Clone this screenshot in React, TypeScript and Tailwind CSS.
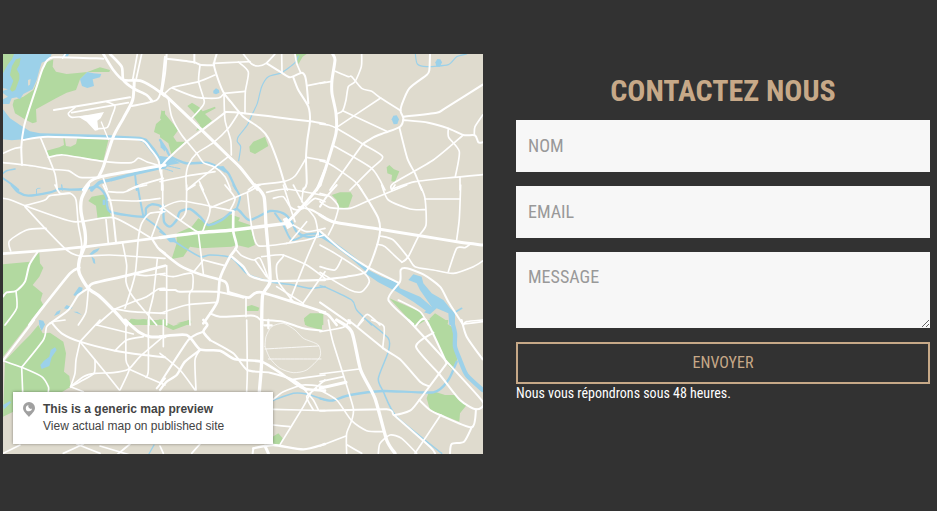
type Road = [number, string];
type Tile = { x: number; y: number; parks: string[]; lakes: string[]; rivers: Road[]; roads: Road[]; blocks?: string[] };

// The map is stored as a 3 by 3 set of sheets, drawn at three units per pixel.
const tiles: Tile[] = [
  {
    x: 0, y: 50,
    parks: [
      '137,38 160,28 158,50 168,65 200,72 240,68 262,66 240,88 228,120 200,128 168,145 108,178 110,216 98,220 78,210 45,190 38,165 42,150 70,140 100,120',
      '262,66 300,52 330,60 328,66',
      '495,182 484,184 488,205 468,222 462,246 495,262',
      '232,265 325,270 310,332 200,315 145,320 140,302 178,292 192,285 190,265 194,265 198,288 212,290 228,282',
    ],
    lakes: [
      '9,12 155,12 148,28 125,38 118,60 110,90 98,118 70,132 60,148 50,142 35,145 28,162 9,162 9,148 24,140 9,130 9,122 24,118 9,114',
      '9,178 30,205 60,225 90,244 120,250 300,254 420,260 440,266 465,296 480,320 495,335 480,336 455,308 430,277 410,270 140,262 70,268 35,271 9,268',
      '240,88 262,66 280,70 304,72 300,82 278,88 282,108 262,114 246,108',
      '186,20 192,12 207,12 203,20',
      '480,272 495,290 495,305 482,292',
    ],
    rivers: [[10, '495,350 400,372 330,390 300,397 275,420'], [6, '405,372 410,420'], [5, '9,370 20,362 45,357'], [6, '9,385 35,403 55,420']],
    roads: [
      [5, '310,26 160,22 130,52 110,110 85,185 72,230 64,290 66,345'],
      [5, '70,270 142,260 340,266 425,270 450,295 475,330 480,360 487,385 488,420'],
      [4, '9,310 45,295 64,292'], [4, '9,338 100,348 155,358 205,362 240,382 295,382'],
      [4, '122,264 145,320 165,372 172,420'], [4, '145,322 190,315 310,334 395,338 415,324 440,335 472,345'],
      [8, '403,90 398,150 370,205 340,260 310,350 295,382'], [4, '412,12 398,90'], [4, '425,12 408,90'],
      [7, '310,12 340,60 370,90 420,92 460,112 495,138'], [7, '330,12 365,50 370,90 400,115 440,135 455,152'],
      [5, '395,168 470,150 485,110 495,20'], [8, '250,420 270,395 295,382 400,362 495,345'],
      [4, '310,385 322,420'], [5, '162,180 390,142'], [4, '215,188 385,158'], [4, '225,172 205,190 216,202 260,198'],
      [4, '320,155 345,168 335,200 322,232 290,236'], [3, '304,216 325,268'],
      [4, '385,420 420,405 490,385'], [4, '188,24 196,12'],
    ],
    blocks: ['235,200 312,186 302,205 292,212 295,240 285,242 260,215'],
  },
  {
    x: 160, y: 50,
    parks: [
      '82,168 96,158 118,172 128,184 165,170 167,175 135,192 156,212 125,238 108,242 120,225 100,200 105,192',
      '5,180 55,240 40,260 50,275 75,275 60,292 35,315 25,280 0,262 0,220 10,215 0,205',
      '268,290 280,275 315,260 325,288 285,312 270,305', '408,12 440,12 428,20 415,43',
    ],
    lakes: ['160,122 168,115 177,120 178,128 168,133 160,130', '0,318 30,322 60,340 30,345 0,360', '170,350 190,348 202,362 195,368'],
    rivers: [
      [3.5, '415,18 405,38 365,68 325,80 305,110 292,160 278,190 262,225 235,260 232,275 242,290 236,332'],
      [7, '0,270 20,300 32,320 80,340 140,338 180,354 205,370 228,418'], [3, '10,345 60,356'], [3, '0,352 38,364'],
    ],
    roads: [
      [8, '0,125 20,140 120,235 205,318 240,352 292,418'], [5, '20,12 15,70 5,130'],
      [5, '20,26 100,36 120,44 160,46'], [5, '103,12 103,38'],
      [5, '170,12 162,45 175,90 192,130 212,155 250,200 300,235 325,265 355,340 372,395 382,420'],
      [4, '160,40 245,36 270,35'], [4, '250,12 275,42 295,48 318,40 345,12'],
      [4, '235,36 265,66 256,125 255,190'], [4, '192,130 256,124'],
      [4, '120,46 116,95 133,155 118,180 95,205'], [4, '165,75 116,95 38,112 15,130'], [4, '38,115 110,142 175,144 192,130'],
      [5, '195,186 240,188 350,202 450,214 495,222'], [4, '192,130 195,210 212,270 214,315'],
      [5, '195,188 140,230 80,275 20,330 0,355'], [4, '235,190 205,235 160,278 110,310 85,345 78,380 80,420'],
      [4, '25,145 35,200 65,255 110,310 130,338 165,352 195,380 212,420'],
      [5, '320,40 365,68 390,82 425,68 435,78 440,105 445,160'], [4, '365,12 366,65'], [4, '405,12 410,40 422,68'],
      [5, '400,82 415,120 445,170 450,214 442,270 438,325 440,400 430,420'], [4, '442,107 495,96'], [4, '440,322 495,332'],
      [4, '265,420 290,405 370,395 405,378 438,325'], [7, '495,360 470,420'],
      [4, '0,395 80,378 165,365'], [4, '205,320 160,355 80,420'], [4, '118,395 130,420'], [4, '5,360 5,420'],
    ],
  },
  {
    x: 320, y: 50,
    parks: ['200,352 208,345 222,358 238,364 225,395 214,394 216,375 202,370'],
    lakes: ['346,37 352,27 361,28 366,37 360,50 349,50', '215,208 220,197 230,196 237,208 232,222 221,223'],
    rivers: [[3.5, '286,12 292,42 320,50 385,44 410,20 440,12']],
    roads: [
      [8, '38,12 45,30 36,90 36,130 48,190 48,250 20,345 0,405'],
      [5, '330,12 328,60 320,75 268,115 245,165 242,185 250,205 240,230 195,248 160,262 128,282'],
      [4, '125,12 124,50 105,95 85,110 78,150 68,182 50,192'], [4, '46,64 85,80 95,80 125,115 155,124 182,144 242,182'],
      [4, '0,100 36,94'], [4, '182,144 50,232'], [4, '68,182 200,244'],
      [5, '250,200 350,188 375,175 488,104'], [5, '250,210 325,218 385,235 430,255 465,256 475,277 488,277'],
      [4, '488,195 465,230 463,256'], [4, '385,236 386,262 418,305 406,380'], [4, '430,255 340,330 220,400 215,420'],
      [4.5, '238,232 262,325 285,370 305,420'], [4, '0,222 25,225 50,235 128,282 188,320 155,355 90,420'],
      [4.5, '128,282 30,420'], [4, '42,288 155,355 195,420'], [4, '0,332 25,340 60,362 105,395 125,420'],
      [4, '215,418 285,395 400,382 488,374'], [4, '420,382 420,420'],
    ],
  },
  {
    x: 0, y: 185,
    parks: [
      '265,48 275,35 315,28 333,95 293,102 288,62',
      '9,238 90,230 118,202 120,235 130,248 118,275 98,300 128,325 122,345 130,360 80,420 9,420',
      '380,408 430,402 495,410 495,420 380,420',
    ],
    lakes: ['220,330 237,305 248,308 246,318 225,333', '268,208 280,196 299,189 294,198 276,210', '274,214 284,222 286,237 280,234', '162,393 170,380 182,374 178,386', '192,370 200,360 218,368 208,374', '220,380 232,380 246,390', '116,404 132,412 135,420 118,420', '308,44 316,44 316,60 308,60'],
    rivers: [
      [7, '35,0 55,22 85,32 150,22 180,12 215,14 255,12 290,5 310,20 320,40 330,80 430,95 438,70 455,58 480,62 495,80'],
      [6, '412,0 430,95'], [5, '430,95 465,120 495,148'], [3, '110,30 110,12 120,10'], [4, '185,0 187,15'],
    ],
    roads: [
      [9, '265,0 245,40 243,80 255,140 255,180 238,225 238,265 265,310 300,335 345,380 380,420'],
      [4, '165,0 180,25 210,25 228,45 235,120 245,180 235,250'], [7, '9,206 190,192 300,180 400,168 495,156'],
      [7, '88,420 130,365 210,265 238,248'], [4, '9,40 30,44 75,62 220,110 340,98 455,160'],
      [4, '75,62 135,45 150,32 210,25'], [4, '75,65 135,130 200,195 240,213 330,210 495,220'],
      [4, '32,198 28,168 80,135 138,130'], [5, '112,202 88,240 75,290 48,318 20,322 9,335'], [4, '48,318 50,370 15,420'],
      [7, '265,310 280,295 380,272 495,242'], [5, '310,0 330,45 340,98 348,172'], [4, '318,104 325,175'],
      [4, '325,20 370,22 405,8 440,0'], [4, '325,45 410,48 480,40'],
      [4, '368,175 380,240 378,290 395,330 440,385 470,420'], [4, '495,80 450,85 425,115 415,160 405,270 375,370'],
      [6, '455,160 475,190 495,205'], [4, '490,60 455,155'], [4, '345,372 400,350 440,335 475,312 495,310'],
      [4, '345,372 395,380 495,385'], [4, '345,372 290,420'], [4, '472,222 460,330 447,385 447,420'], [4, '405,268 440,272 495,265'],
      [4, '265,310 258,380 235,420'], [5, '265,310 235,330 205,375 150,415'],
    ],
  },
  {
    x: 160, y: 185,
    parks: [
      '50,145 95,125 115,100 145,118 210,88 240,98 235,108 270,120 285,180 265,188 230,180 215,185 120,190 90,185 70,215 35,222 50,175',
      '258,365 275,360 298,368 295,378 260,378', '432,400 450,385 490,385 490,420 435,420', '50,415 88,405 88,420',
    ],
    lakes: ['18,160 45,158 50,172 30,172'],
    rivers: [
      [7, '10,60 12,110 30,125 50,105 60,80 90,72 120,95 145,120 185,105 230,72 268,105 330,78 370,85 395,110 410,140 440,155 495,155'],
      [5, '0,140 60,180 120,215 150,210 215,218 260,265 330,290 400,300 450,310 495,305'],
      [6, '220,0 240,35 230,72'], [6, '345,85 370,120 395,165 440,148 480,145'],
    ],
    roads: [
      [9, '0,158 115,143 220,135 380,115'], [9, '285,0 312,35 318,120 325,200 330,290 308,330 305,420'],
      [7, '0,195 60,242 120,268 195,290 205,322'], [7, '220,80 220,140 230,185 210,215 180,280 172,350 130,415'],
      [5, '0,315 45,315 60,320 170,320 250,338'], [7, '205,322 265,338 305,322 495,382'],
      [4, '8,0 8,65 5,85'], [4, '0,72 65,48 210,76 220,80'], [4, '8,68 115,142 135,120 150,70 120,0'],
      [4, '80,0 78,80 62,105'], [4, '80,15 105,0'], [4, '195,0 225,40 210,76'], [4, '152,68 262,22 300,0'],
      [4, '262,22 275,125 295,182 380,175'], [4, '380,175 440,165 495,150'], [4, '115,143 130,265'],
      [4, '130,225 195,242'], [4, '130,225 100,262'], [4, '0,268 40,275 95,265 98,310 88,330 90,420'],
      [4, '20,242 20,420'], [4, '0,385 80,360 172,352'], [4, '225,190 245,212 280,225 300,220 325,280'],
      [4, '305,215 370,210 350,240 355,290 400,350'], [6, '215,215 250,245 270,272 330,288 495,285'],
      [4, '370,210 440,240 495,280'], [4, '285,225 320,275'], [4, '475,140 440,220 390,345'], [4, '495,260 460,310 425,360'],
      [4, '350,305 430,355'], [4, '258,340 258,395'], [5, '150,385 180,395 280,392 305,408'],
      [8, '480,0 440,50 380,115'], [4, '400,0 430,55 465,100 475,150'], [4, '320,22 380,12 495,32'],
      [4, '340,40 370,35 390,65 410,75 430,70'], [5, '415,65 455,75 495,98'], [4, '430,10 425,50'],
      [4, '370,0 395,80 405,110'], [4, '440,60 465,40 495,50'], [4, '390,170 440,110'], [4, '400,120 440,140 495,130'],
    ],
    blocks: ['368,102 380,97 400,122 382,133'],
  },
  {
    x: 320, y: 185,
    parks: ['35,30 60,22 92,22 98,32 85,68 55,68 50,45', '208,340 300,380 310,395 280,418', '325,420 330,400 345,385 385,410 380,420'],
    lakes: [
      '265,285 280,268 305,275 310,295 335,325 370,345 390,370 405,385 405,420 388,420 385,385 350,370 330,388 312,382 335,365 300,315 290,295',
      '135,250 185,275 230,292 240,310 300,335 335,365 322,380 280,350 230,320 175,292 140,268',
    ],
    rivers: [[10, '0,150 40,175 100,220 140,255'], [5, '400,385 425,370'], [4, '0,302 20,308 95,345 110,375 155,420']],
    roads: [
      [8, '0,90 45,112 180,133 300,152 420,172 488,180'], [5, '115,0 150,55 175,100 180,140 165,200 138,260 80,275 0,285'],
      [4, '300,0 315,40 318,120 295,155 265,215 245,232'], [4, '185,0 205,45 270,72 315,74'],
      [4, '315,42 420,42'], [4, '422,0 418,100 410,165'], [4, '260,0 150,45 90,70 30,68 0,50'],
      [5, '0,65 20,35 50,0'], [4, '215,15 225,0'], [4, '0,25 30,35 55,65 42,115 25,150'],
      [5, '0,138 60,190 140,245 235,293'], [4, '180,153 220,165 265,218 285,245 340,255 400,265 460,245 488,228'],
      [4, '172,178 195,185 245,230 265,215'], [4, '385,260 410,190 435,188 450,178'],
      [5, '280,418 205,345 240,290 242,255 260,250 310,268 360,305 385,350 430,420'],
      [4, '235,345 300,380 325,420'], [4, '0,180 45,205 130,262 148,290 125,320 90,315 0,262'],
      [4, '0,245 45,255 65,222'], [5, '0,352 90,415'], [4, '115,420 142,388 180,420'],
      [4, '430,420 440,410 488,405'], [7, '0,380 25,390 50,420'],
    ],
  },
  {
    x: 0, y: 320,
    parks: ['9,0 95,0 9,110', '15,122 60,75 90,45 115,15 128,40 150,38 190,65 198,100 192,155 208,168 212,200 180,220 40,275 9,290'],
    lakes: ['118,0 130,2 134,15 125,33 119,20', '165,82 170,90 155,112 148,138 125,147 121,135 132,122 148,110 152,90', '9,255 30,243 33,248 12,268'],
    rivers: [[4, '445,405 462,375'], [12, '395,2 440,8 495,4']],
    roads: [
      [6, '9,122 102,0'], [4, '65,142 130,60 140,20 160,5 195,0'], [4, '9,122 65,142 125,170 145,200 145,215'], [4, '65,142 68,215'],
      [5, '155,8 185,40 240,65 345,92 440,106 495,112'], [4, '240,65 300,0'], [4, '240,65 228,120 225,160 212,200'],
      [4, '240,65 310,150 358,210'], [4, '285,120 282,160 240,185 212,200'], [4, '212,200 250,170 285,160 340,158 385,148 420,110 490,50'],
      [4, '290,15 400,42'], [4, '345,92 380,60 430,50'], [4, '378,0 378,120 388,148 360,210'], [4, '388,148 495,195'],
      [4, '445,0 445,150 438,172'], [8, '375,0 415,35 450,50 495,50'], [5, '470,205 495,175'], [4, '212,200 250,215'],
      [4, '9,400 60,375'], [4, '190,400 250,372'], [4, '230,372 300,400'], [4, '350,405 390,372'], [4, '300,378 390,405'],
    ],
  },
  {
    x: 160, y: 320,
    parks: ['432,0 488,0 485,30 440,18', '338,350 355,340 368,355 360,374 340,372'],
    lakes: [],
    rivers: [[4.5, '335,243 400,220 440,222 495,240']],
    roads: [
      [9, '305,0 305,125 298,215'], [7, '0,50 80,45 120,88 180,92 225,118 305,125 370,165 430,205 495,212'],
      [7, '130,0 142,15 130,35 150,60'], [5, '150,60 220,100 262,150 330,158 400,180 440,210'],
      [5, '130,35 85,60 0,190'], [6, '120,90 75,125 50,165 20,185 0,210'], [4, '120,90 105,120 108,210'], [4, '0,100 60,150 105,210'],
      [4, '260,0 262,150 260,215'], [4, '10,0 10,80'], [2, '315,80 318,50 335,20 370,10 405,30 430,55 475,75 480,110 440,150 400,158 360,145 330,115 315,80'],
      [2.5, '315,87 475,78'], [2.5, '325,117 483,117'], [5, '310,0 370,5 430,25 485,32'], [6, '325,0 325,25'], [6, '313,16 335,16'],
      [4, '340,238 370,215 430,195 495,200'], [4, '400,178 495,165'], [4, '340,268 495,272'], [4, '340,315 390,320'],
      [4, '430,205 460,240 475,270'], [4, '495,180 455,215 430,260 360,374'], [4, '470,205 440,230 460,270'],
      [6, '280,385 340,375 430,388 495,372'], [5, '280,385 278,400'], [8, '315,378 325,400'], [4, '95,400 120,372'], [4, '0,378 10,400'],
    ],
  },
  {
    x: 320, y: 320,
    parks: ['0,0 5,0 5,30 0,32', '262,0 318,0 285,20', '320,0 385,0 382,12 398,22 400,60 412,120 395,148 380,130', '320,235 325,220 345,215 375,225 405,225 440,255 420,280 418,305 330,270'],
    lakes: [],
    rivers: [[13, '395,0 405,40 405,80 420,120 440,165 488,210'], [7, '410,125 385,180 340,217 190,213 90,225 35,242 0,235'], [4.5, '140,0 205,55 205,95 175,175 190,215 230,290 365,400']],
    roads: [
      [9, '50,0 95,35 122,150 165,235 200,360 225,400'], [4, '0,35 70,22 90,0'], [4, '25,0 40,70 100,265 80,340 80,400'], [4, '112,20 130,0'],
      [5, '85,0 190,85 240,118 300,185 325,198'], [4, '188,85 192,20 155,0'], [4, '0,162 118,147'], [4, '0,185 70,170'],
      [8, '0,205 78,187'], [4, '0,210 50,240 95,302 140,332 190,335'], [5, '0,272 200,268 222,285 270,272 298,240 380,130'],
      [5, '222,285 330,380 345,400'], [5, '298,240 330,270 360,285 455,322 468,268'],
      [5, '265,0 385,130 488,245 468,268 420,240 360,165 288,80 340,38'], [5, '285,20 318,0 380,130'],
      [4, '362,285 285,400'], [5, '455,322 432,365 395,372 390,400'], [5, '425,0 440,50 488,118'], [4, '432,12 488,5'],
      [4, '0,378 78,348'], [4, '82,375 125,400'], [4, '175,400 180,370 210,345 245,355 290,400'],
    ],
  },
];

// Rounds the bends of a point list while passing through every point.
function smooth(points: string): string {
  const p = points.split(' ').map((s) => s.split(',').map(Number));
  let d = `M${p[0][0]} ${p[0][1]}`;
  for (let i = 0; i < p.length - 1; i++) {
    const a = p[i - 1] ?? p[i];
    const b = p[i];
    const c = p[i + 1];
    const e = p[i + 2] ?? c;
    const k = Math.min(0.12, 14 / Math.hypot(c[0] - b[0], c[1] - b[1]));
    d += `C${b[0] + (c[0] - a[0]) * k} ${b[1] + (c[1] - a[1]) * k} ${c[0] - (e[0] - b[0]) * k} ${c[1] - (e[1] - b[1]) * k} ${c[0]} ${c[1]}`;
  }
  return d;
}

const place = (t: Tile) => `translate(${t.x} ${t.y}) scale(0.33333)`;

function CityMap() {
  return (
    <svg className="block h-full w-full" viewBox="3 54 480 400" fill="none" strokeLinecap="round" strokeLinejoin="round">
      <rect x="3" y="54" width="480" height="400" fill="#dfdbce" />
      {tiles.map((t, i) => (
        <g key={i} transform={place(t)} fill="#b2d9a0">
          {t.parks.map((p) => <polygon key={p} points={p} />)}
        </g>
      ))}
      {tiles.map((t, i) => (
        <g key={i} transform={place(t)} stroke="#9cd1e9">
          {t.lakes.map((p) => <polygon key={p} points={p} fill="#9cd1e9" stroke="none" />)}
          {t.rivers.map(([w, p]) => <path key={p} d={smooth(p)} strokeWidth={w} stroke={w === 12 ? '#b2d9a0' : undefined} />)}
        </g>
      ))}
      <g transform="translate(0 50) scale(0.33333)">
        <path d="M9 12H42L36 28L24 43L9 70ZM48 28L62 24L58 45L50 58L58 72V88L46 120L36 125L30 118L40 92L30 75L36 48Z" fill="#b2d9a0" />
        <path d="M84 90L92 87L90 104L84 107Z" fill="#dfdbce" />
      </g>
      <g transform="translate(160 320) scale(0.33333)">
        <path d="M0 5L40 24L88 6" stroke="#b2d9a0" strokeWidth="12" />
      </g>
      {tiles.map((t, i) => (
        <g key={i} transform={place(t)} stroke="#fff">
          {t.roads.map(([w, p]) => <path key={p} d={smooth(p)} strokeWidth={w < 3 ? w : w + 1} />)}
          {t.blocks?.map((p) => <polygon key={p} points={p} fill="#fff" stroke="none" />)}
        </g>
      ))}
    </svg>
  );
}

export default function App() {
  return (
    <main className="flex h-[511px] w-[937px] items-start overflow-hidden bg-[#323232] pl-[3px] font-['Roboto_Condensed','Roboto',sans-serif] [font-stretch:75%]">
      <section className="relative mt-[54px] h-[400px] w-[480px] shrink-0 overflow-hidden">
        <CityMap />
        <div className="absolute bottom-[10px] left-[10px] flex h-[52px] w-[260px] bg-white pt-[9px] pl-[10px] font-['Liberation_Sans',Arial,sans-serif] text-[12px] leading-[17px] text-[#444] shadow-[0_0_3px_rgba(0,0,0,0.4)] [font-stretch:100%]">
          <svg className="mt-[1px] mr-2 h-[15px] w-3" viewBox="0 0 12 15">
            <path d="M6 0A6 6 0 0 0 0 6C0 9.8 4 12.2 6 15C8 12.2 12 9.8 12 6A6 6 0 0 0 6 0Z" fill="#a0a0a0" />
            <path d="M5.5 3.2A3.1 3.1 0 1 0 9 6.6A2.6 2.6 0 0 1 5.5 3.2Z" fill="#fff" />
          </svg>
          <div className="whitespace-nowrap">
            <p className="font-bold">This is a generic map preview</p>
            <p>View actual map on published site</p>
          </div>
        </div>
      </section>
      <section className="ml-[33px] w-[414px] shrink-0 pt-[71px]">
        <h2 className="mb-[9px] text-center text-[30px] leading-[40px] font-bold text-[#c7a988]">CONTACTEZ NOUS</h2>
        <form className="flex flex-col" onSubmit={(e) => e.preventDefault()}>
          <input className="mb-[14px] h-[52px] rounded-none bg-[#f7f7f7] px-3 pb-[2px] text-[18px] outline-none placeholder:text-[#999]" placeholder="NOM" />
          <input className="mb-[14px] h-[52px] rounded-none bg-[#f7f7f7] px-3 pb-[2px] text-[18px] outline-none placeholder:text-[#999]" placeholder="EMAIL" />
          <textarea className="mb-[14px] block h-[76px] resize rounded-none bg-[#f7f7f7] px-3 py-[14px] text-[18px] leading-[22px] outline-none placeholder:text-[#999]" placeholder="MESSAGE" />
          <button className="h-[42px] border-2 border-[#c7a988] text-[16px] text-[#c7a988]">ENVOYER</button>
        </form>
        <p className="text-[14px] leading-[19px] text-white">Nous vous répondrons sous 48 heures.</p>
      </section>
    </main>
  );
}
